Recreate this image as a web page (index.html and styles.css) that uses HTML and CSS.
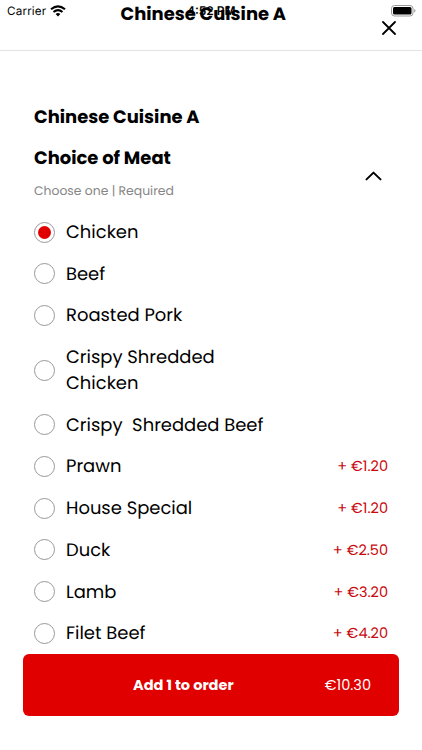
FILE: index.html
```
<!DOCTYPE html>
<html lang="en">
<head>
<meta charset="utf-8">
<meta name="viewport" content="width=device-width, initial-scale=1">
<title>Chinese Cuisine A</title>
<link rel="stylesheet" href="styles.css">
</head>
<body>
<div class="screen">
  <header class="header">
    <div class="status">
      <span class="carrier">Carrier</span>
      <svg class="wifi" width="16" height="12" viewBox="0 0 16 12" fill="none" stroke="#000" stroke-width="2.1"><path d="M1 4.3Q8 -1.7 15 4.3M3.5 7Q8 3.2 12.5 7"/><path d="M5.6 9Q8 7.2 10.4 9L8 11.4Z" fill="#000" stroke="none"/></svg>
      <svg class="battery" width="25" height="12" viewBox="0 0 25 12"><rect x=".5" y=".5" width="21.5" height="10.5" rx="3" fill="#fff" stroke="#999"/><rect x="2" y="2" width="18.5" height="7.5" rx="1.5"/><path d="M23.2 4v3.6q1.3-.5 1.3-1.8t-1.3-1.8Z" fill="#999"/></svg>
    </div>
    <span class="clock">4:52 PM</span>
    <h1 class="header-title">Chinese Cuisine A</h1>
    <svg class="close" width="14" height="14" viewBox="0 0 14 14" fill="none" stroke="#000" stroke-width="1.8" stroke-linecap="round"><path d="M1 1l12 12M13 1L1 13"/></svg>
  </header>
  <main class="content">
    <h2 class="dish">Chinese Cuisine A</h2>
    <div class="group">
      <div>
        <h3 class="group-title">Choice of Meat</h3>
        <p class="hint">Choose one | Required</p>
      </div>
      <svg class="chevron" width="18" height="10" viewBox="0 0 18 10" fill="none" stroke="#000" stroke-width="2" stroke-linecap="round" stroke-linejoin="round"><path d="M2.5 8.4L9.5 1.6l7 6.8"/></svg>
    </div>
    <ul class="options">
      <li class="option"><span class="radio checked"></span><span class="name">Chicken</span></li>
      <li class="option"><span class="radio"></span><span class="name">Beef</span></li>
      <li class="option"><span class="radio"></span><span class="name">Roasted Pork</span></li>
      <li class="option"><span class="radio"></span><span class="name">Crispy Shredded<br>Chicken</span></li>
      <li class="option"><span class="radio"></span><span class="name">Crispy  Shredded Beef</span></li>
      <li class="option"><span class="radio"></span><span class="name">Prawn</span><span class="price">+ €1.20</span></li>
      <li class="option"><span class="radio"></span><span class="name">House Special</span><span class="price">+ €1.20</span></li>
      <li class="option"><span class="radio"></span><span class="name">Duck</span><span class="price">+ €2.50</span></li>
      <li class="option"><span class="radio"></span><span class="name">Lamb</span><span class="price">+ €3.20</span></li>
      <li class="option"><span class="radio"></span><span class="name">Filet Beef</span><span class="price">+ €4.20</span></li>
    </ul>
  </main>
  <button class="add"><span class="add-label">Add 1 to order</span><span class="total">€10.30</span></button>
</div>
</body>
</html>
```
FILE: styles.css
```
* { box-sizing: border-box; }
body, h1, h2, h3, p, ul { margin: 0; padding: 0; }
body { background: #fff; color: #000; font-family: Poppins, Inter, sans-serif; text-rendering: geometricPrecision; }
.screen { width: 422px; height: 750px; overflow: hidden; }

.header { position: relative; height: 51px; border-bottom: 1px solid #e3e3e3; }
.status { display: flex; align-items: center; height: 22px; padding: 0 6px 0 7px; }
.carrier { font-family: Inter, sans-serif; font-size: 11.7px; letter-spacing: .15px; }
.wifi { margin-left: 4px; }
.battery { margin-left: auto; }
.clock { position: absolute; left: 187px; top: 3px; font-family: Inter, sans-serif; font-size: 12px; line-height: 16px; font-weight: 600; white-space: nowrap; }
.header-title { position: absolute; left: 120.5px; top: 1px; font-size: 17.95px; line-height: 27px; font-weight: 700; white-space: nowrap; }
.close { position: absolute; left: 382px; top: 21px; }

.content { padding: 53px 34px 0; height: 603px; }
.dish, .group-title { font-size: 17.95px; line-height: 27px; font-weight: 700; white-space: nowrap; }
.group { display: flex; justify-content: space-between; margin-top: 14px; height: 75px; }
.hint { margin-top: 10px; font-size: 12.4px; line-height: 19px; color: #858585; }
.chevron { margin: 26px 6px 0 0; }

.options { list-style: none; display: flex; flex-direction: column; gap: 15.7px; }
.option { display: flex; align-items: center; line-height: 26px; }
.radio { flex: none; display: grid; place-items: center; width: 21px; height: 21px; margin: 0 11px 2px 0; border: 1px solid #999; border-radius: 50%; }
.checked::after { content: ""; width: 13px; height: 13px; border-radius: 50%; background: #e00000; }
.name { font-size: 17.95px; white-space: pre; }
.price { margin-left: auto; font-size: 14.5px; color: #c9090d; white-space: nowrap; }

.add { display: flex; align-items: center; justify-content: space-between; width: 376px; height: 62px; margin-left: 23px; padding: 0 28px 0 110px; border: 0; border-radius: 6px; background: #e00000; color: #fff; font-family: inherit; font-size: 14.5px; }
.add-label { font-weight: 700; }
```
